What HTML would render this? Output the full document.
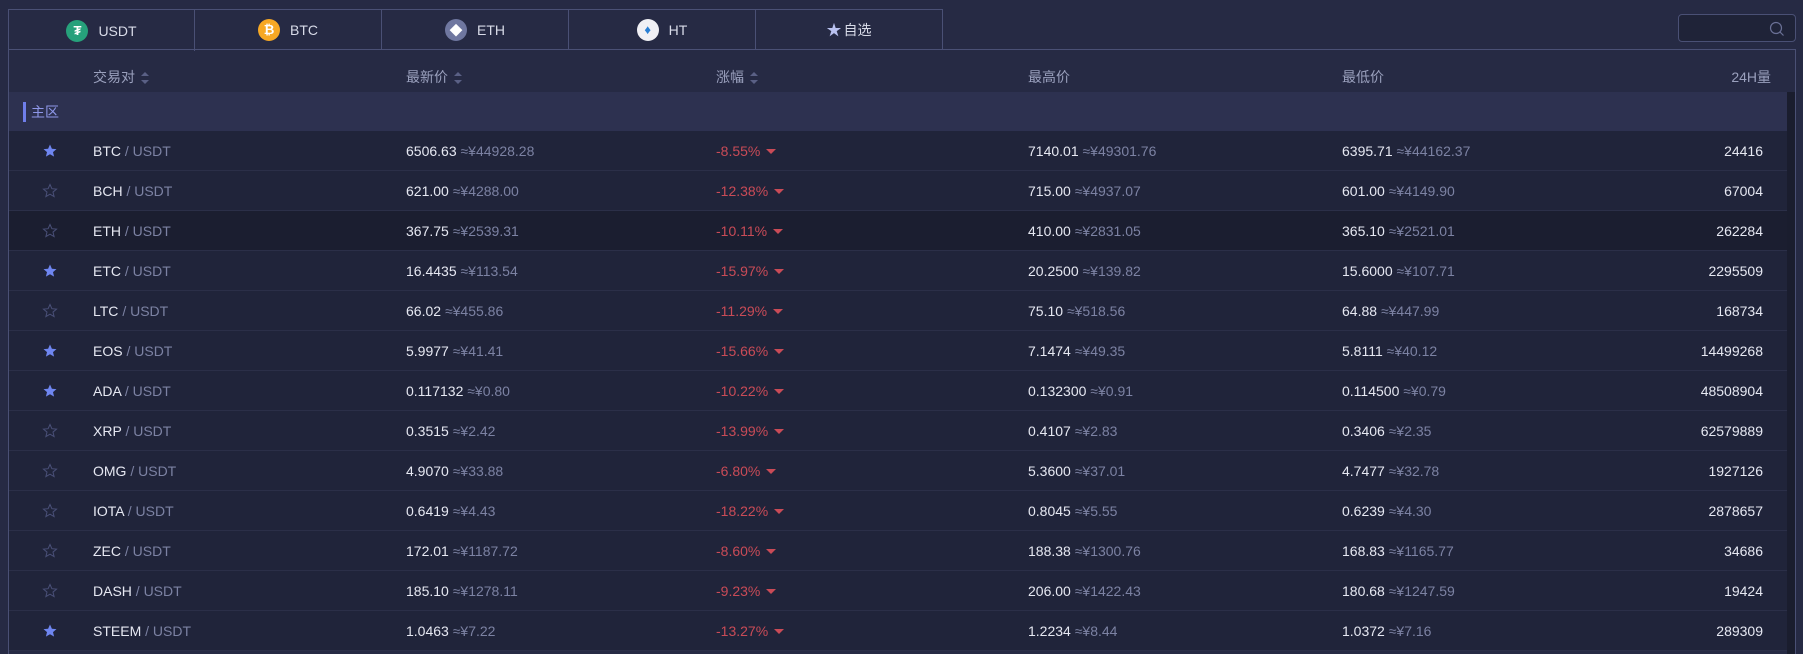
<!DOCTYPE html>
<html><head><meta charset="utf-8"><style>
*{margin:0;padding:0;box-sizing:border-box}
html,body{width:1803px;height:654px;overflow:hidden}
body{background:#262a44;font-family:"Liberation Sans","Noto Sans CJK SC",sans-serif;font-size:14px;color:#e6e8f2;position:relative}
.tabs{position:absolute;left:8px;top:9px;height:41px;display:flex}
.tab{width:187px;height:41px;border:1px solid #4a5075;border-left:none;display:flex;align-items:center;justify-content:center;color:#d8dbe8;font-size:14px;gap:10px}
.tab:first-child{border-left:1px solid #4a5075;border-bottom:none;height:42px}
.ic{width:22px;height:22px;border-radius:50%;display:inline-flex;align-items:center;justify-content:center;font-size:13px;font-weight:bold;color:#fff}
.search{position:absolute;left:1678px;top:14px;width:118px;height:28px;border:1px solid #4a5075;border-radius:4px;background:#1f2338}
.box{position:absolute;left:8px;top:49px;width:1788px;height:605px;border-left:1px solid #4a5075;border-top:1px solid #4a5075;border-right:1px solid #4a5075;overflow:hidden}
.hdr{position:absolute;top:6px;left:0;width:1778px;height:42px;color:#9aa0bd;font-size:14px}
.hdr span,.row span{position:absolute;top:50%;transform:translateY(-50%);white-space:nowrap}
.sec{position:absolute;top:42px;left:0;width:1778px;height:39px;background:#2d3150;color:#8e97e8}
.sec i{position:absolute;left:14px;top:10px;width:3px;height:20px;background:#6f7eea}
.sec b{font-weight:normal;position:absolute;left:22px;top:10px}
.scroll{position:absolute;left:1778px;top:42px;width:10px;height:580px;background:#1a1d2e}
.row{position:absolute;left:0;width:1778px;height:40px;background:#20243a;border-bottom:1px solid #2b2f48}
.row.h{background:#1b1e30}
.g{color:#7c82a3}
.r{color:#c94b57}
.s{left:33px;width:16px;height:16px}
.tri{display:inline-block;width:0;height:0;border-left:5px solid transparent;border-right:5px solid transparent;border-top:5px solid #c94b57;margin-left:6px;vertical-align:middle}
.sort{display:inline-block;vertical-align:middle;margin-left:6px;width:8px;height:12px;position:relative}
.sort:before,.sort:after{content:"";position:absolute;left:0;border-left:4px solid transparent;border-right:4px solid transparent}
.sort:before{top:0;border-bottom:4px solid #5a6085}
.sort:after{bottom:0;border-top:4px solid #5a6085}
</style></head><body>
<div class="tabs">
<div class="tab"><span class="ic" style="background:#26a17b">₮</span>USDT</div>
<div class="tab"><span class="ic" style="background:#f7a824">₿</span>BTC</div>
<div class="tab"><span class="ic" style="background:#6f77a0">◆</span>ETH</div>
<div class="tab"><span class="ic" style="background:#f0f0f5;color:#2a7fd4">♦</span>HT</div>
<div class="tab" style="gap:2px"><span style="color:#b9c1f0;font-size:15px">★</span>自选</div>
</div>
<div class="search"><svg style="position:absolute;right:10px;top:6px" width="16" height="16" viewBox="0 0 16 16"><circle cx="7" cy="7" r="5.5" fill="none" stroke="#6a7096" stroke-width="1.2"/><path d="M11 11l3.5 3.5" stroke="#6a7096" stroke-width="1.2"/></svg></div>
<div class="box">
<div class="hdr">
<span style="left:84px">交易对<i class="sort"></i></span>
<span style="left:397px">最新价<i class="sort"></i></span>
<span style="left:707px">涨幅<i class="sort"></i></span>
<span style="left:1019px">最高价</span>
<span style="left:1333px">最低价</span>
<span style="right:16px">24H量</span>
</div>
<div class="sec"><i></i><b>主区</b></div>
<div class="scroll"></div>
<div id="rows"></div>
</div>
<script>
var d=[[1,"BTC","6506.63","44928.28","-8.55%","7140.01","49301.76","6395.71","44162.37","24416"],
[0,"BCH","621.00","4288.00","-12.38%","715.00","4937.07","601.00","4149.90","67004"],
[0,"ETH","367.75","2539.31","-10.11%","410.00","2831.05","365.10","2521.01","262284"],
[1,"ETC","16.4435","113.54","-15.97%","20.2500","139.82","15.6000","107.71","2295509"],
[0,"LTC","66.02","455.86","-11.29%","75.10","518.56","64.88","447.99","168734"],
[1,"EOS","5.9977","41.41","-15.66%","7.1474","49.35","5.8111","40.12","14499268"],
[1,"ADA","0.117132","0.80","-10.22%","0.132300","0.91","0.114500","0.79","48508904"],
[0,"XRP","0.3515","2.42","-13.99%","0.4107","2.83","0.3406","2.35","62579889"],
[0,"OMG","4.9070","33.88","-6.80%","5.3600","37.01","4.7477","32.78","1927126"],
[0,"IOTA","0.6419","4.43","-18.22%","0.8045","5.55","0.6239","4.30","2878657"],
[0,"ZEC","172.01","1187.72","-8.60%","188.38","1300.76","168.83","1165.77","34686"],
[0,"DASH","185.10","1278.11","-9.23%","206.00","1422.43","180.68","1247.59","19424"],
[1,"STEEM","1.0463","7.22","-13.27%","1.2234","8.44","1.0372","7.16","289309"]];
var h="";
d.forEach(function(r,i){
var star=r[0]?'<svg class="s" viewBox="0 0 16 16"><path d="M8 1.5l1.9 4.2 4.6.4-3.5 3 1.1 4.5L8 11.2l-4.1 2.4 1.1-4.5-3.5-3 4.6-.4z" fill="#6f86f0"/></svg>':'<svg class="s" viewBox="0 0 16 16"><path d="M8 1.5l1.9 4.2 4.6.4-3.5 3 1.1 4.5L8 11.2l-4.1 2.4 1.1-4.5-3.5-3 4.6-.4z" fill="none" stroke="#4a5078" stroke-width="1"/></svg>';
h+='<div class="row'+(i==2?' h':'')+'" style="top:'+(81+40*i)+'px">'+
'<span style="left:33px;height:16px">'+star+'</span>'+
'<span style="left:84px">'+r[1]+' <em class="g" style="font-style:normal">/ USDT</em></span>'+
'<span style="left:397px">'+r[2]+' <em class="g" style="font-style:normal">≈¥'+r[3]+'</em></span>'+
'<span class="r" style="left:707px">'+r[4]+'<i class="tri"></i></span>'+
'<span style="left:1019px">'+r[5]+' <em class="g" style="font-style:normal">≈¥'+r[6]+'</em></span>'+
'<span style="left:1333px">'+r[7]+' <em class="g" style="font-style:normal">≈¥'+r[8]+'</em></span>'+
'<span style="right:24px">'+r[9]+'</span></div>';});
document.getElementById("rows").innerHTML=h;
</script>
</body></html>
